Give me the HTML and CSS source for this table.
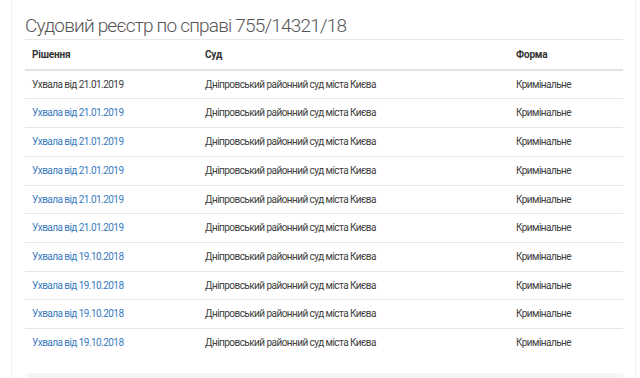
FILE: index.html
```html
<!DOCTYPE html>
<html lang="uk">
<head>
<meta charset="utf-8">
<link rel="stylesheet" href="styles.css">
</head>
<body>
<div class="frame">
  <div class="content">
    <h2 class="title">Судовий реєстр по справі 755/14321/18</h2>
    <table class="reg">
      <thead>
        <tr><th class="c1">Рішення</th><th class="c2">Суд</th><th class="c3">Форма</th></tr>
      </thead>
      <tbody>
        <tr><td>Ухвала від 21.01.2019</td><td>Дніпровський районний суд міста Києва</td><td>Кримінальне</td></tr>
        <tr><td><a href="#">Ухвала від 21.01.2019</a></td><td>Дніпровський районний суд міста Києва</td><td>Кримінальне</td></tr>
        <tr><td><a href="#">Ухвала від 21.01.2019</a></td><td>Дніпровський районний суд міста Києва</td><td>Кримінальне</td></tr>
        <tr><td><a href="#">Ухвала від 21.01.2019</a></td><td>Дніпровський районний суд міста Києва</td><td>Кримінальне</td></tr>
        <tr><td><a href="#">Ухвала від 21.01.2019</a></td><td>Дніпровський районний суд міста Києва</td><td>Кримінальне</td></tr>
        <tr><td><a href="#">Ухвала від 21.01.2019</a></td><td>Дніпровський районний суд міста Києва</td><td>Кримінальне</td></tr>
        <tr><td><a href="#">Ухвала від 19.10.2018</a></td><td>Дніпровський районний суд міста Києва</td><td>Кримінальне</td></tr>
        <tr><td><a href="#">Ухвала від 19.10.2018</a></td><td>Дніпровський районний суд міста Києва</td><td>Кримінальне</td></tr>
        <tr><td><a href="#">Ухвала від 19.10.2018</a></td><td>Дніпровський районний суд міста Києва</td><td>Кримінальне</td></tr>
        <tr><td><a href="#">Ухвала від 19.10.2018</a></td><td>Дніпровський районний суд міста Києва</td><td>Кримінальне</td></tr>
      </tbody>
    </table>
    <div class="footer-box"></div>
  </div>
</div>
</body>
</html>
```
FILE: styles.css
```css
html, body {
  margin: 0;
  padding: 0;
  background: #fff;
}
body {
  font-family: Roboto, "Open Sans", sans-serif;
  color: #333;
  height: 378px;
  overflow: hidden;
}
.frame {
  margin-left: 11px;
  width: 625px;
  border-left: 1px solid #f3f3f3;
  border-right: 1px solid #f3f3f3;
  height: 378px;
  box-sizing: border-box;
}
.content {
  padding: 0 11px 0 13px;
}
.title {
  margin: 0;
  padding-top: 12px;
  height: 27px;
  font-size: 19px;
  line-height: 27px;
  font-weight: 300;
  color: #555;
  letter-spacing: -0.8px;
  white-space: nowrap;
}
.reg {
  width: 598px;
  border-collapse: collapse;
  font-size: 10px;
  line-height: 12.7px;
  letter-spacing: -0.55px;
}
.reg th, .reg td {
  text-align: left;
  padding: 8px 7px 7px;
  border-top: 1px solid #e6e6e6;
  white-space: nowrap;
}
.reg td {
  color: #3d3d3d;
}
.reg th {
  font-weight: 700;
  color: #333;
  letter-spacing: -0.2px;
  padding-top: 9px;
  padding-bottom: 7px;
  border-bottom: 2px solid #e3e3e3;
}
.reg tbody tr:first-child td {
  border-top: 0;
}
.c1 { width: 159px; }
.c2 { width: 297px; }
.reg a {
  color: #3a7bbf;
  text-decoration: none;
}
.footer-box {
  margin-top: 16px;
  margin-left: 2px;
  width: 596px;
  height: 20px;
  background: #f6f6f6;
}
```
